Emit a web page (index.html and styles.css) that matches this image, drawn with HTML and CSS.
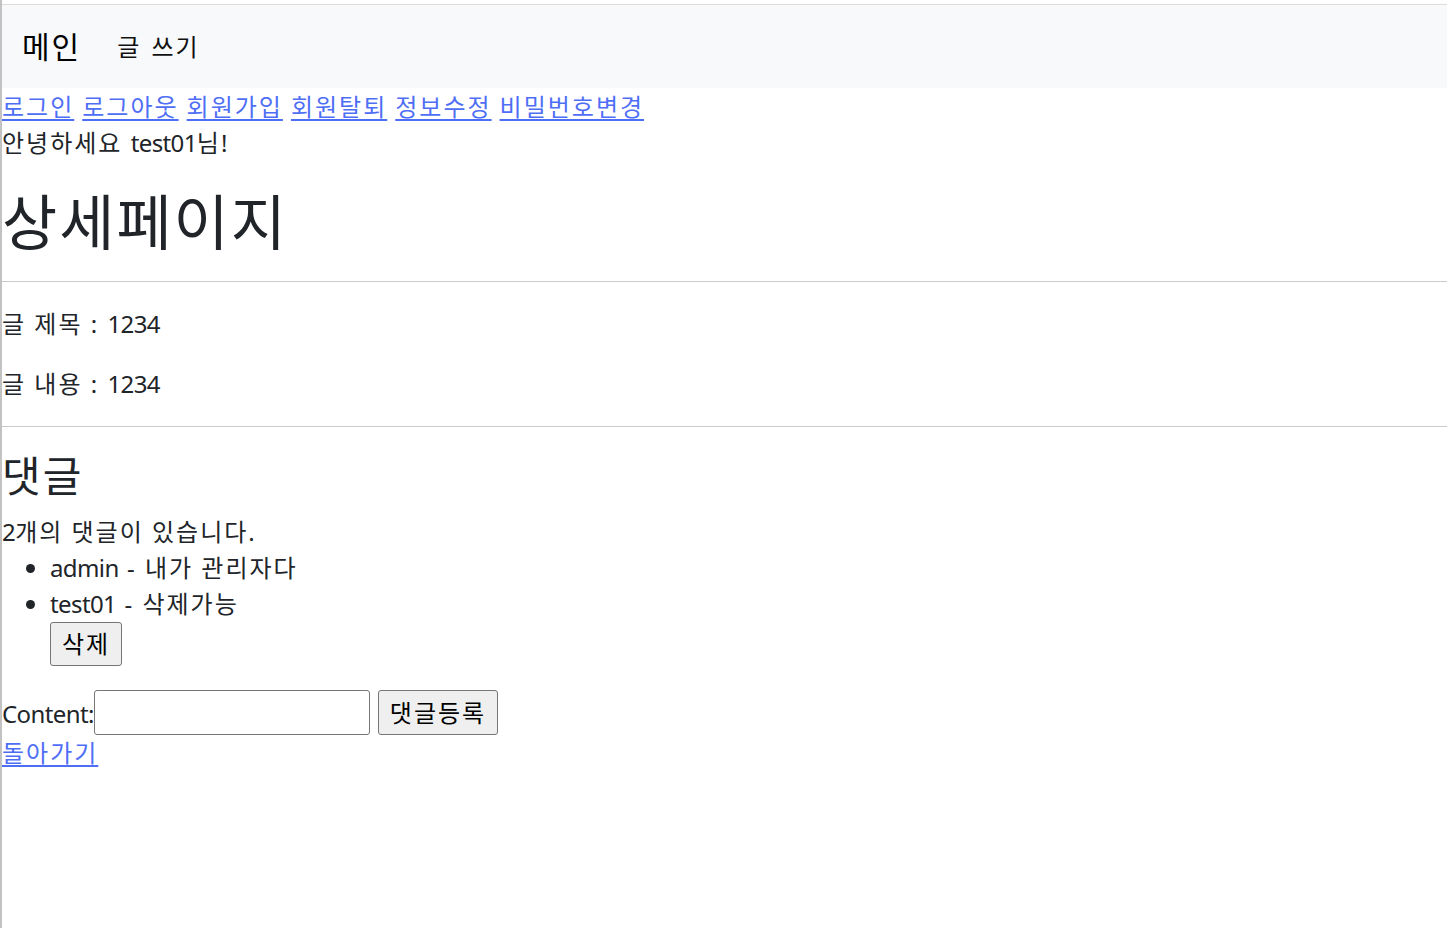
FILE: index.html
```html
<!DOCTYPE html>
<html lang="ko">
<head>
<meta charset="utf-8">
<title>상세페이지</title>
<link rel="stylesheet" href="styles.css">
</head>
<body>
<nav class="navbar">
  <div class="nav-inner">
    <a class="brand" href="#">메인</a>
    <a class="nav-link" href="#">글 쓰기</a>
  </div>
</nav>
<div class="user-links">
  <a href="#">로그인</a>
  <a href="#">로그아웃</a>
  <a href="#">회원가입</a>
  <a href="#">회원탈퇴</a>
  <a href="#">정보수정</a>
  <a href="#">비밀번호변경</a>
</div>
<p class="greeting">안녕하세요 <span class="en">test01</span>님!</p>
<h1 class="title">상세페이지</h1>
<hr class="rule">
<p class="field">글 제목 : <span class="en">1234</span></p>
<p class="field">글 내용 : <span class="en">1234</span></p>
<hr class="rule">
<h3 class="sub">댓글</h3>
<div class="count"><span class="en">2</span>개의 댓글이 있습니다.</div>
<ul class="comments">
  <li><span class="en">admin</span> - 내가 관리자다</li>
  <li><span class="en">test01</span> - 삭제가능<br><button class="btn btn-del" type="button">삭제</button></li>
</ul>
<form class="comment-form">
  <label class="label en" for="content">Content:</label><input class="input" id="content" type="text"><button class="btn btn-submit" type="button">댓글등록</button>
</form>
<a class="back" href="#">돌아가기</a>
</body>
</html>
```

FILE: styles.css
```css
html {
  background: #ffffff;
}
body {
  margin: 0;
  padding-top: 4px;
  min-height: 924px;
  border-left: 2px solid #c2c2c2;
  font-family: "Noto Sans", "Noto Sans CJK KR", sans-serif;
  font-size: 24px;
  line-height: 36px;
  color: #212529;
  letter-spacing: 2px;
  word-spacing: 0;
}
.en {
  letter-spacing: -0.6px;
}
a {
  color: #4f6ef6;
  text-decoration: underline;
  text-underline-offset: 3px;
}
.navbar {
  background: #f8f9fa;
  border-top: 1px solid #dcdcdc;
  padding: 12px 0;
  height: 59px;
}
.nav-inner {
  display: flex;
  align-items: center;
  padding: 0 20px;
}
.brand {
  font-size: 30px;
  line-height: 45px;
  padding: 7px 0 8px;
  margin-right: 24px;
  color: #000;
  text-decoration: none;
}
.nav-link {
  padding: 12px 12px;
  color: #111;
  text-decoration: none;
  font-size: 24px;
  word-spacing: 2px;
}
.user-links {
  display: flex;
  gap: 8px;
  line-height: 36px;
  margin-top: 1px;
}
.greeting {
  margin: 0 0 24px;
}
.title {
  font-size: 60px;
  line-height: 74px;
  font-weight: 400;
  margin: 0 0 12px;
  letter-spacing: 2px;
}
.rule {
  margin: 22px 0 24px;
  border: 0;
  border-top: 1px solid #c9cacb;
  height: 0;
}
.field {
  margin: 0 0 24px;
}
.sub {
  font-size: 42px;
  line-height: 50px;
  font-weight: 400;
  margin: 0 0 13px;
}
.comments {
  margin: 0 0 24px;
  padding-left: 48px;
}
.btn {
  font-family: inherit;
  font-size: 24px;
  line-height: 36px;
  color: #000;
  background: #efefef;
  border: 1px solid #767676;
  border-radius: 3px;
  padding: 3px 11px;
  margin: 0;
  letter-spacing: 2px;
}
.btn-del {
  vertical-align: top;
  margin-top: 0;
}
.comment-form {
  display: flex;
  align-items: center;
}
.label {
  line-height: 36px;
  margin-top: 3px;
}
.input {
  width: 272px;
  height: 41px;
  border: 1px solid #767676;
  border-radius: 3px;
  padding: 1px;
  margin: 0 8px 0 0;
  font-size: 24px;
}
.btn-submit {
  height: 45px;
  padding: 0 11px;
}
.back {
  display: inline-block;
}
```
